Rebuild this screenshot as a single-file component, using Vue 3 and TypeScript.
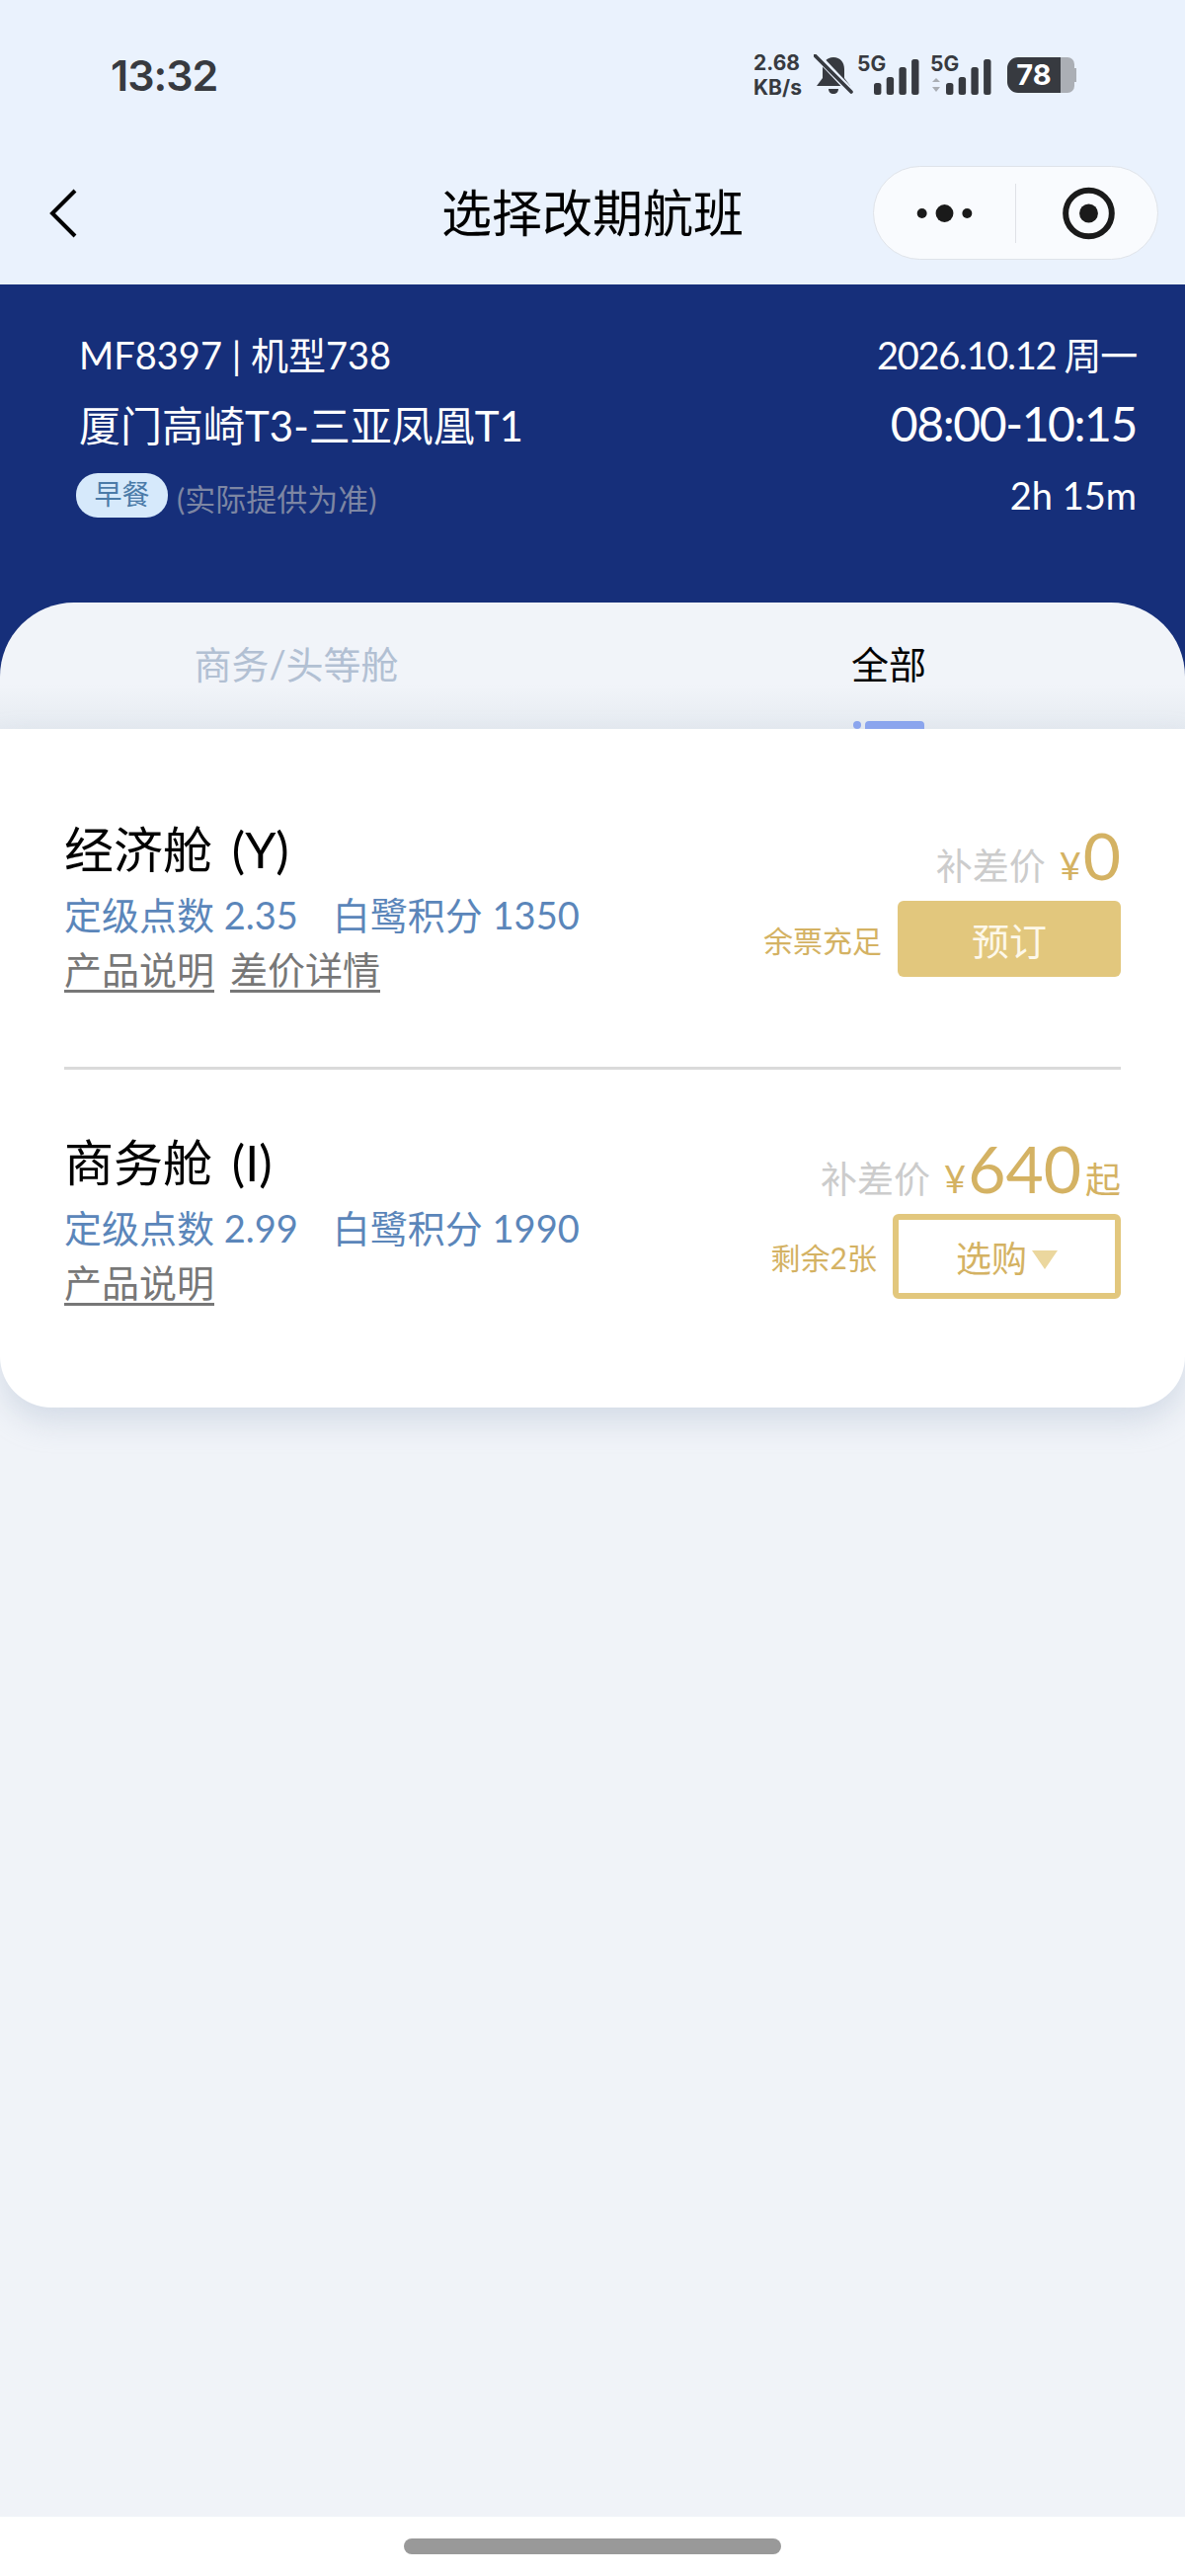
<script setup lang="ts">
interface Cabin {
  name: string
  points: string
  miles: string
  links: string[]
  price: string
  suffix?: string
  stock: string
  action: string
  outlined?: boolean
}

const cabins: Cabin[] = [
  {
    name: '经济舱 (Y)',
    points: '定级点数 2.35',
    miles: '白鹭积分 1350',
    links: ['产品说明', '差价详情'],
    price: '0',
    stock: '余票充足',
    action: '预订',
  },
  {
    name: '商务舱 (I)',
    points: '定级点数 2.99',
    miles: '白鹭积分 1990',
    links: ['产品说明'],
    price: '640',
    suffix: '起',
    stock: '剩余2张',
    action: '选购',
    outlined: true,
  },
]

const bars = [
  { x: 0, h: 12 },
  { x: 12.7, h: 18 },
  { x: 25.4, h: 28 },
  { x: 38.1, h: 36 },
]
</script>

<template>
  <div class="page">
    <header class="top">
      <div class="status">
        <span class="time">13:32</span>
        <div class="status-icons">
          <span class="speed"><b>2.68</b><b>KB/s</b></span>
          <svg class="bell" width="40" height="42" viewBox="0 0 40 42">
            <path d="M20 3c7 0 11 5 11 12v9l6 8H3l6-8v-9C9 8 13 3 20 3z" fill="#373a40" />
            <path d="M15 35h10c0 3-2 5-5 5s-5-2-5-5z" fill="#373a40" />
            <path d="M2 0l36 38" stroke="#eaf2fd" stroke-width="7" />
            <path d="M1 1l37 37" stroke="#373a40" stroke-width="3.6" stroke-linecap="round" />
          </svg>
          <svg class="signal" width="46" height="42" viewBox="0 0 46 42">
            <text x="-17" y="17" class="net">5G</text>
            <rect v-for="b in bars" :key="b.x" :x="b.x" :y="41 - b.h" width="7.4" :height="b.h" rx="2.5" fill="#373a40" />
          </svg>
          <svg class="signal second" width="62" height="42" viewBox="0 0 62 42">
            <text x="0" y="17" class="net">5G</text>
            <path d="M2 28l4-4 4 4zM2 33l4 5 4-5z" fill="#a9adb3" />
            <rect v-for="b in bars" :key="b.x" :x="b.x + 16" :y="41 - b.h" width="7.4" :height="b.h" rx="2.5" fill="#373a40" />
          </svg>
          <div class="battery">
            <span class="level">78</span>
            <span class="rest"></span>
            <span class="nub"></span>
          </div>
        </div>
      </div>
      <div class="nav">
        <svg class="back" width="28" height="50" viewBox="0 0 28 50">
          <path d="M26 2L3 25l23 23" fill="none" stroke="#000" stroke-width="4" />
        </svg>
        <h1 class="nav-title">选择改期航班</h1>
        <div class="capsule">
          <svg width="144" height="60" viewBox="0 0 144 60">
            <circle cx="49" cy="30" r="5" fill="#1a1a1a" />
            <circle cx="72" cy="30" r="9" fill="#1a1a1a" />
            <circle cx="95" cy="30" r="5" fill="#1a1a1a" />
          </svg>
          <span class="capsule-line"></span>
          <svg width="144" height="60" viewBox="0 0 144 60">
            <circle cx="74" cy="30" r="23.5" fill="none" stroke="#1a1a1a" stroke-width="6" />
            <circle cx="74" cy="30" r="9.5" fill="#1a1a1a" />
          </svg>
        </div>
      </div>
    </header>

    <section class="flight">
      <div class="flight-info">
        <div class="line">
          <span>MF8397 | 机型738</span>
          <span class="date">2026.10.12 周一</span>
        </div>
        <div class="line route">
          <span>厦门高崎T3-三亚凤凰T1</span>
          <span class="clock">08:00-10:15</span>
        </div>
        <div class="line meal-line">
          <div class="meal">
            <span class="tag">早餐</span>
            <span class="note">(实际提供为准)</span>
          </div>
          <span>2h 15m</span>
        </div>
      </div>
      <div class="tabs">
        <div class="tab">商务/头等舱</div>
        <div class="tab active">
          全部
          <span class="indicator"><i></i><em></em></span>
        </div>
      </div>
    </section>

    <main class="content">
      <div class="card">
        <div v-for="cabin in cabins" :key="cabin.name" class="cabin">
          <div class="cabin-left">
            <div class="cabin-name">{{ cabin.name }}</div>
            <div class="stats">
              <span>{{ cabin.points }}</span>
              <span>{{ cabin.miles }}</span>
            </div>
            <div class="links">
              <a v-for="link in cabin.links" :key="link">{{ link }}</a>
            </div>
          </div>
          <div class="cabin-right">
            <div class="price-row">
              <span class="diff">补差价</span>
              <span class="yen">¥</span>
              <span class="amount">{{ cabin.price }}</span>
              <span v-if="cabin.suffix" class="suffix">{{ cabin.suffix }}</span>
            </div>
            <div class="buy-row">
              <span class="stock">{{ cabin.stock }}</span>
              <button class="buy" :class="{ outlined: cabin.outlined }">
                {{ cabin.action }}<i v-if="cabin.outlined" class="caret"></i>
              </button>
            </div>
          </div>
        </div>
      </div>
    </main>

    <footer class="home-bar"><span></span></footer>
  </div>
</template>

<style scoped>
.page {
  display: flex;
  flex-direction: column;
  width: 1200px;
  height: 2608px;
  overflow: hidden;
  background: #f0f3f8;
  font-family: Lato, 'Noto Sans CJK SC', sans-serif;
}
.top {
  height: 288px;
  background: #eaf2fd;
}
.status {
  display: flex;
  align-items: center;
  justify-content: space-between;
  height: 152px;
  padding: 0 110px 0 112px;
}
.time {
  font-family: Inter, sans-serif;
  font-size: 43px;
  font-weight: 600;
  letter-spacing: -1px;
  color: #373a40;
}
.status-icons {
  display: flex;
  align-items: center;
}
.speed {
  display: flex;
  flex-direction: column;
  width: 61px;
  font-family: Inter, sans-serif;
  font-size: 21px;
  line-height: 25px;
  color: #373a40;
}
.speed b {
  font-weight: 700;
}
.bell {
  margin-right: 21px;
}
.signal {
  overflow: visible;
}
.signal.second {
  margin-left: 11px;
  margin-right: 16px;
}
.net {
  font-family: Inter, sans-serif;
  font-size: 21px;
  font-weight: 700;
  fill: #373a40;
}
.battery {
  display: flex;
  align-items: center;
  height: 36px;
}
.level {
  width: 54px;
  height: 36px;
  border-radius: 11px 0 0 11px;
  background: #373a40;
  color: #fff;
  font-family: Inter, sans-serif;
  font-size: 29px;
  font-weight: 700;
  line-height: 36px;
  text-align: center;
}
.rest {
  width: 14px;
  height: 36px;
  border-radius: 0 7px 7px 0;
  background: #abafb5;
}
.nub {
  width: 2px;
  height: 14px;
  background: #abafb5;
}
.nav {
  position: relative;
  display: flex;
  align-items: center;
  justify-content: center;
  height: 95px;
  margin-top: 16px;
}
.back {
  position: absolute;
  left: 50px;
  top: 23px;
}
.nav-title {
  margin: -6px 0 0;
  font-size: 51px;
  font-weight: 400;
  color: #000;
}
.capsule {
  position: absolute;
  right: 27px;
  top: 0;
  display: flex;
  align-items: center;
  box-sizing: border-box;
  width: 289px;
  height: 95px;
  border: 1px solid #dfe3e9;
  border-radius: 48px;
  background: #f9fbfe;
}
.capsule-line {
  width: 1px;
  height: 60px;
  background: #dfe2e7;
}
.flight {
  background: #162f7a;
  color: #fff;
}
.flight-info {
  height: 322px;
  box-sizing: border-box;
  padding: 46px 49px 0 80px;
}
.line {
  display: flex;
  align-items: center;
  justify-content: space-between;
  height: 46px;
  font-size: 38px;
}
.date {
  letter-spacing: -1.3px;
}
.route {
  height: 52px;
  margin-top: 22px;
  font-size: 42px;
}
.clock {
  font-size: 48px;
  letter-spacing: -1.4px;
}
.meal-line {
  margin-top: 24px;
  height: 46px;
}
.meal {
  display: flex;
  align-items: center;
  margin-left: -3px;
}
.tag {
  width: 93px;
  height: 45px;
  border-radius: 22px;
  background: #d6e9fb;
  color: #4b7ba8;
  font-size: 28px;
  line-height: 42px;
  text-align: center;
}
.note {
  margin: 5px 0 0 9px;
  font-size: 31px;
  color: #7d86a3;
}
.tabs {
  display: flex;
  height: 128px;
  border-radius: 75px 75px 0 0;
  background: linear-gradient(#f1f4f9 65%, #e6ebf1);
}
.tab {
  position: relative;
  flex: 1;
  padding-top: 37px;
  font-size: 38px;
  line-height: 50px;
  text-align: center;
  color: #b2c0d3;
}
.tab.active {
  color: #000;
}
.indicator {
  position: absolute;
  left: 264px;
  bottom: 0;
  display: flex;
  gap: 4px;
  height: 8px;
}
.indicator i {
  width: 8px;
  border-radius: 4px;
  background: #8aa5f0;
}
.indicator em {
  width: 60px;
  border-radius: 4px 4px 0 0;
  background: #8aa5f0;
}
.content {
  flex: 1;
}
.card {
  position: relative;
  height: 687px;
  box-sizing: border-box;
  padding: 0 65px;
  border-radius: 0 0 52px 52px;
  background: #fff;
  box-shadow: 0 14px 30px rgba(170, 185, 205, 0.4);
}
.cabin {
  display: flex;
  justify-content: space-between;
  height: 342px;
  box-sizing: border-box;
  padding-top: 90px;
}
.cabin + .cabin {
  height: 320px;
  padding-top: 62px;
  border-top: 3px solid #dadada;
}
.cabin-name {
  font-size: 50px;
  line-height: 64px;
  word-spacing: 7px;
  color: #000;
}
.stats {
  display: flex;
  gap: 35px;
  margin-top: 9px;
  font-size: 38px;
  line-height: 50px;
  color: #5b86ba;
}
.links {
  display: flex;
  gap: 16px;
  margin-top: 7px;
}
.links a {
  font-size: 38px;
  line-height: 46px;
  color: #777;
  border-bottom: 3px solid #777;
  height: 44px;
}
.cabin-right {
  display: flex;
  flex-direction: column;
  align-items: flex-end;
}
.price-row {
  display: flex;
  align-items: baseline;
  height: 76px;
}
.diff {
  font-size: 37px;
  color: #ccc;
}
.yen {
  margin-left: 14px;
  font-size: 38px;
  color: #d4b263;
}
.amount {
  margin-left: 2px;
  font-size: 66px;
  line-height: 76px;
  color: #d4b263;
}
.suffix {
  margin-left: 4px;
  font-size: 36px;
  color: #d4b263;
}
.buy-row {
  display: flex;
  align-items: center;
  gap: 16px;
  margin-top: 8px;
}
.stock {
  font-size: 30px;
  color: #d4b263;
}
.buy {
  display: flex;
  align-items: center;
  justify-content: center;
  width: 226px;
  height: 77px;
  padding: 0;
  border: 0;
  border-radius: 6px;
  background: #e2c77d;
  color: #fdf8ea;
  font-family: inherit;
  font-size: 38px;
}
.buy.outlined {
  width: 231px;
  height: 86px;
  box-sizing: border-box;
  border: 6px solid #e2c77d;
  background: #fff;
  color: #d4b263;
  font-size: 36px;
}
.caret {
  width: 0;
  height: 0;
  margin: 6px 0 0 5px;
  border-style: solid;
  border-width: 19px 13px 0;
  border-color: #ebd79e transparent transparent;
}
.home-bar {
  display: flex;
  align-items: center;
  justify-content: center;
  height: 60px;
  background: #fff;
}
.home-bar span {
  width: 382px;
  height: 16px;
  border-radius: 8px;
  background: #999;
}
</style>
